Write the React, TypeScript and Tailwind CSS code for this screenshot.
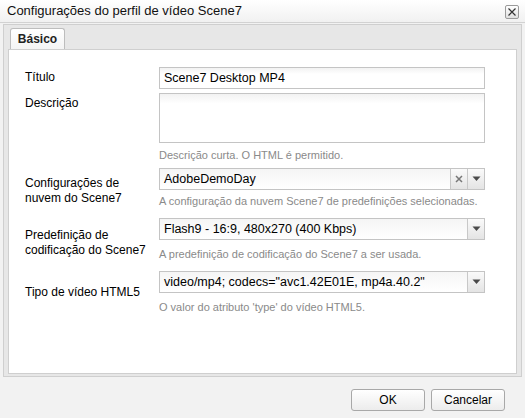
import React from "react";

function Chevron() {
  return (
    <svg width="9" height="6" viewBox="0 0 9 6">
      <path d="M0.5 0.5 L8.5 0.5 L4.5 5 Z" fill="#4a4a4a" />
    </svg>
  );
}

function DropBtn() {
  return (
    <div className="w-[17px] h-full flex items-center justify-center border-l border-[#c8c8c8] bg-gradient-to-b from-[#fafafa] to-[#e4e4e4]">
      <Chevron />
    </div>
  );
}

function Row({ label, children, top }: { label: React.ReactNode; children: React.ReactNode; top?: string }) {
  return (
    <div className="flex">
      <div className={`w-[134px] shrink-0 text-[12px] leading-[15px] text-black ${top ?? ""}`}>{label}</div>
      <div className="w-[326px]">{children}</div>
    </div>
  );
}

export default function App() {
  return (
    <div className="w-[525px] h-[418px] bg-[#f2f2f2] flex flex-col font-['Liberation_Sans',sans-serif] overflow-hidden">
      {/* Title bar */}
      <div className="h-[23px] shrink-0 flex items-center justify-between pl-[7px] pr-[6px] bg-gradient-to-b from-[#ffffff] to-[#f1f1f1] border-b border-[#d2d2d2]">
        <span className="text-[13px] text-[#111]">Configurações do perfil de vídeo Scene7</span>
        <div className="w-[14px] h-[14px] mt-[1px] rounded-[2px] border border-[#9a9a9a] bg-gradient-to-b from-white to-[#e0e0e0] flex items-center justify-center">
          <svg width="8" height="8" viewBox="0 0 8 8">
            <path d="M0.5 0.5 L7.5 7.5 M7.5 0.5 L0.5 7.5" stroke="#333" strokeWidth="1.2" />
          </svg>
        </div>
      </div>

      {/* Body */}
      <div className="mx-[3px] mt-[1px] h-[353px] shrink-0 border border-[#cfcfcf] bg-[#e7e7e7] flex flex-col pb-[2px] px-[4px]">
        <div className="h-[24px] shrink-0 flex items-end pl-[2px]">
          <div className="h-[21px] w-[55px] rounded-t-[3px] border border-b-0 border-[#bdbdbd] bg-gradient-to-b from-[#ffffff] to-[#f4f4f4] flex items-center justify-center text-[12px] font-bold text-[#222]">
            Básico
          </div>
        </div>
        <div className="flex-1 bg-white border border-[#cfcfcf] pt-[17px] pl-[16px] flex flex-col">
          <Row label="Título" top="pt-[3px]">
            <div className="h-[22px] border border-[#c4c4c4] bg-gradient-to-b from-[#f2f2f2] to-white to-[30%] flex items-center px-[4px] text-[12.5px] text-black">
              Scene7 Desktop MP4
            </div>
          </Row>
          <div className="h-[4px]" />
          <Row label="Descrição" top="pt-[3px]">
            <div className="h-[50px] border border-[#c4c4c4] bg-gradient-to-b from-[#f2f2f2] to-white to-[20%]" />
            <div className="text-[11px] text-[#8a8a8a] mt-[6px] leading-[13px]">Descrição curta. O HTML é permitido.</div>
          </Row>
          <div className="h-[6px]" />
          <Row label={<>Configurações de<br />nuvem do Scene7</>} top="pt-[8px]">
            <div className="h-[22px] border border-[#c4c4c4] bg-gradient-to-b from-[#f5f5f5] to-white flex items-center text-[12.5px] text-black">
              <span className="flex-1 px-[4px]">AdobeDemoDay</span>
              <div className="w-[17px] h-full flex items-center justify-center border-l border-[#c8c8c8] bg-gradient-to-b from-[#fafafa] to-[#e4e4e4]">
                <svg width="8" height="8" viewBox="0 0 8 8">
                  <path d="M1 1 L7 7 M7 1 L1 7" stroke="#777" strokeWidth="1.5" />
                </svg>
              </div>
              <DropBtn />
            </div>
            <div className="text-[11px] text-[#8a8a8a] mt-[5px] leading-[13px]">A configuração da nuvem Scene7 de predefinições selecionadas.</div>
          </Row>
          <div className="h-[10px]" />
          <Row label={<>Predefinição de<br />codificação do Scene7</>} top="pt-[10px]">
            <div className="h-[22px] border border-[#c4c4c4] bg-gradient-to-b from-[#f5f5f5] to-white flex items-center text-[12.5px] text-black">
              <span className="flex-1 px-[4px]">Flash9 - 16:9, 480x270 (400 Kbps)</span>
              <DropBtn />
            </div>
            <div className="text-[11px] text-[#8a8a8a] mt-[8px] leading-[13px]">A predefinição de codificação do Scene7 a ser usada.</div>
          </Row>
          <div className="h-[10px]" />
          <Row label="Tipo de vídeo HTML5" top="pt-[14px]">
            <div className="h-[22px] border border-[#c4c4c4] bg-gradient-to-b from-[#f5f5f5] to-white flex items-center text-[12.5px] text-black">
              <span className="flex-1 px-[4px]">video/mp4; codecs="avc1.42E01E, mp4a.40.2"</span>
              <DropBtn />
            </div>
            <div className="text-[11px] text-[#8a8a8a] mt-[8px] leading-[13px]">O valor do atributo 'type' do vídeo HTML5.</div>
          </Row>
        </div>
      </div>

      {/* Footer */}
      <div className="flex-1 flex justify-end items-start pt-[12px] pr-[20px] gap-[6px]">
        <button className="w-[74px] h-[22px] rounded-[3px] border border-[#a8a8a8] bg-gradient-to-b from-white to-[#ececec] text-[12px] text-black">OK</button>
        <button className="w-[74px] h-[22px] rounded-[3px] border border-[#a8a8a8] bg-gradient-to-b from-white to-[#ececec] text-[12px] text-black">Cancelar</button>
      </div>
    </div>
  );
}
